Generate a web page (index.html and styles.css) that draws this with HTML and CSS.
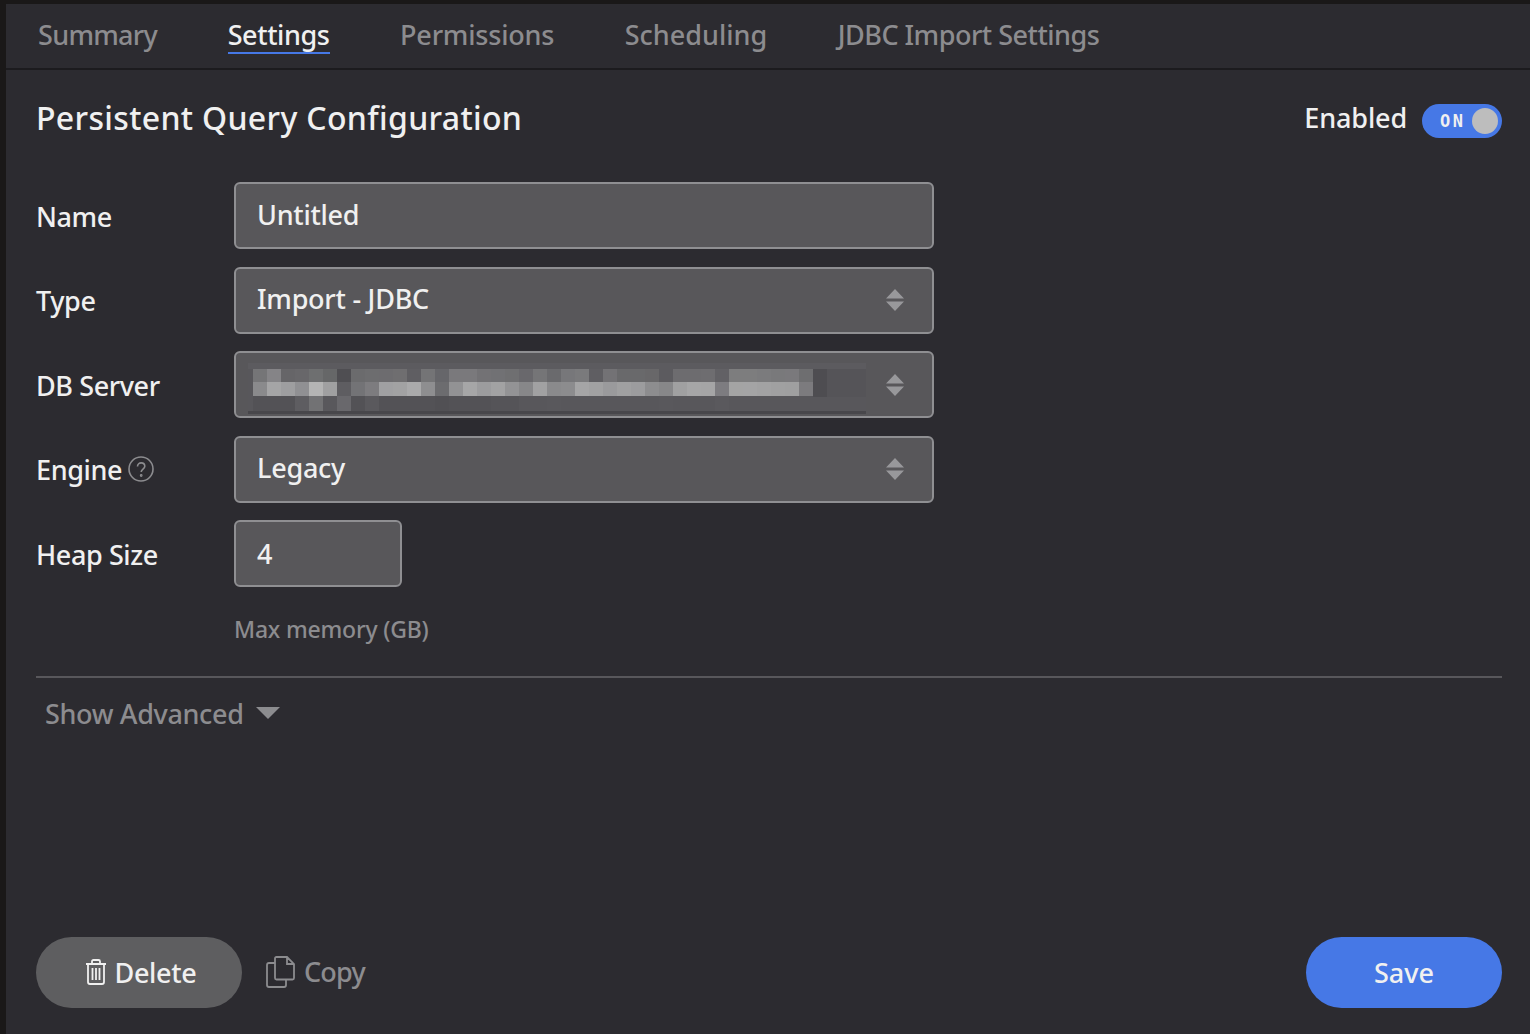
FILE: index.html
```html
<!DOCTYPE html>
<html lang="en">
<head>
<meta charset="utf-8">
<title>Persistent Query Configuration</title>
<link rel="stylesheet" href="styles.css">
</head>
<body>
<main class="panel">
  <nav class="tabs">
    <a class="tab tight">Summary</a>
    <a class="tab active">Settings</a>
    <a class="tab mid">Permissions</a>
    <a class="tab loose">Scheduling</a>
    <a class="tab long">JDBC Import Settings</a>
  </nav>
  <section class="content">
    <header class="head">
      <h1 class="title">Persistent Query Configuration</h1>
      <div class="enabled">
        <span class="enabled-label">Enabled</span>
        <span class="toggle"><span class="toggle-text">ON</span><span class="knob"></span></span>
      </div>
    </header>
    <form class="form">
      <div class="row">
        <label class="label">Name</label>
        <div class="field">Untitled</div>
      </div>
      <div class="row">
        <label class="label">Type</label>
        <div class="field">Import - JDBC
          <svg class="updown" viewBox="0 0 18 24"><path d="M9 1 L18 10.500 H0 Z M0 13.500 H18 L9 23 Z"/></svg>
        </div>
      </div>
      <div class="row">
        <label class="label">DB Server</label>
        <div class="field">
          <svg class="redacted" viewBox="0 0 618 51" shape-rendering="crispEdges">
            <rect class="base" x="0" y="0" width="618" height="51" fill="#58575b"/>
            <rect class="base" x="0" y="0" width="618" height="6" fill="#5c5b5f"/>
            <rect class="base" x="0" y="48" width="618" height="3" fill="#48474b"/>
            <rect class="base" x="565" y="6" width="53" height="28" fill="#555458"/>
            <rect class="base" x="565" y="6" width="14" height="28" fill="#4e4d51"/>
            <g class="cells r1">
              <rect x="5" fill="#757577"/><rect x="19" fill="#858487"/><rect x="33" fill="#666568"/><rect x="47" fill="#68676a"/><rect x="61" fill="#6e6f70"/><rect x="75" fill="#666768"/><rect x="89" fill="#4f4e52"/><rect x="103" fill="#6b6b6d"/><rect x="117" fill="#6d6d6f"/><rect x="131" fill="#6d6c6f"/><rect x="145" fill="#6f6e70"/><rect x="159" fill="#5f5e62"/><rect x="173" fill="#747476"/><rect x="187" fill="#66666a"/><rect x="201" fill="#7a797c"/><rect x="215" fill="#7a797c"/><rect x="229" fill="#737275"/><rect x="243" fill="#717174"/><rect x="257" fill="#6f6f71"/><rect x="271" fill="#69686c"/><rect x="285" fill="#757577"/><rect x="299" fill="#6a6a6d"/><rect x="313" fill="#77777a"/><rect x="327" fill="#7a7a7c"/><rect x="341" fill="#5f5e62"/><rect x="355" fill="#737275"/><rect x="369" fill="#69696b"/><rect x="383" fill="#69696b"/><rect x="397" fill="#686769"/><rect x="411" fill="#5c5b5f"/><rect x="425" fill="#6d6c6f"/><rect x="439" fill="#6d6c6f"/><rect x="453" fill="#6e6d70"/><rect x="467" fill="#626165"/><rect x="481" fill="#7d7d7e"/><rect x="495" fill="#7d7d7e"/><rect x="509" fill="#7b7b7d"/><rect x="523" fill="#79797b"/><rect x="537" fill="#7a797c"/><rect x="551" fill="#6e6e70"/>
            </g>
            <g class="cells r2">
              <rect x="5" fill="#8a8a8c"/><rect x="19" fill="#a5a5a6"/><rect x="33" fill="#9e9ea0"/><rect x="47" fill="#909093"/><rect x="61" fill="#b4b4b4"/><rect x="75" fill="#a0a0a1"/><rect x="89" fill="#5e5d61"/><rect x="103" fill="#737376"/><rect x="117" fill="#7d7c7f"/><rect x="131" fill="#a0a0a2"/><rect x="145" fill="#a2a2a3"/><rect x="159" fill="#aaaaab"/><rect x="173" fill="#8e8e90"/><rect x="187" fill="#6c6c6f"/><rect x="201" fill="#929294"/><rect x="215" fill="#a6a6a7"/><rect x="229" fill="#9c9c9e"/><rect x="243" fill="#a2a2a3"/><rect x="257" fill="#939395"/><rect x="271" fill="#878789"/><rect x="285" fill="#a1a1a2"/><rect x="299" fill="#8a8a8c"/><rect x="313" fill="#8c8c8e"/><rect x="327" fill="#a5a5a6"/><rect x="341" fill="#a1a1a2"/><rect x="355" fill="#9a9a9c"/><rect x="369" fill="#a0a0a1"/><rect x="383" fill="#9c9c9e"/><rect x="397" fill="#8d8d8f"/><rect x="411" fill="#878789"/><rect x="425" fill="#a0a0a1"/><rect x="439" fill="#a6a6a7"/><rect x="453" fill="#a5a5a6"/><rect x="467" fill="#7d7c80"/><rect x="481" fill="#a4a4a4"/><rect x="495" fill="#a4a4a5"/><rect x="509" fill="#a2a2a3"/><rect x="523" fill="#a0a0a1"/><rect x="537" fill="#9f9fa0"/><rect x="551" fill="#7c7b7e"/>
            </g>
            <g class="cells r3">
              <rect x="5" fill="#535256"/><rect x="19" fill="#535256"/><rect x="33" fill="#535256"/><rect x="47" fill="#5e5d61"/><rect x="61" fill="#727274"/><rect x="75" fill="#59585c"/><rect x="89" fill="#69686c"/><rect x="103" fill="#535256"/><rect x="117" fill="#5a595d"/><rect x="131" fill="#535256"/><rect x="145" fill="#535256"/><rect x="159" fill="#535256"/><rect x="173" fill="#535256"/><rect x="187" fill="#515054"/><rect x="201" fill="#535256"/><rect x="215" fill="#535256"/><rect x="229" fill="#535256"/><rect x="243" fill="#555458"/><rect x="257" fill="#555458"/><rect x="299" fill="#59585c"/><rect x="411" fill="#59585c"/><rect x="467" fill="#5a595d"/>
            </g>
          </svg>
          <svg class="updown" viewBox="0 0 18 24"><path d="M9 1 L18 10.500 H0 Z M0 13.500 H18 L9 23 Z"/></svg>
        </div>
      </div>
      <div class="row">
        <label class="label">Engine
          <svg class="help" viewBox="0 0 26 26"><circle cx="13" cy="13" r="12" /><path d="M9.500 10.500 C9.500 5.500 16.800 5.800 16.800 10.300 C16.800 13 13.200 13.300 13.200 16"/><circle class="dot" cx="13.200" cy="19.500" r="0.600"/></svg>
        </label>
        <div class="field">Legacy
          <svg class="updown" viewBox="0 0 18 24"><path d="M9 1 L18 10.500 H0 Z M0 13.500 H18 L9 23 Z"/></svg>
        </div>
      </div>
      <div class="row">
        <label class="label">Heap Size</label>
        <div class="field short">4</div>
      </div>
      <p class="hint">Max memory (GB)</p>
    </form>
    <div class="advanced">Show Advanced <svg class="caret" viewBox="0 0 24 12"><path d="M0 0 H24 L12 12 Z"/></svg></div>
    <footer class="actions">
      <button class="btn delete" type="button">
        <svg class="ico-trash" viewBox="0 0 22 26"><path d="M1 5 H21 M7 5 V2.500 Q7 1 8.500 1 H13.500 Q15 1 15 2.500 V5 M3 5 V23 Q3 25 5 25 H17 Q19 25 19 23 V5 M7.500 9 V21 M11 9 V21 M14.500 9 V21"/></svg>
        Delete
      </button>
      <button class="btn copy" type="button">
        <svg class="ico-copy" viewBox="0 0 29 32"><path d="M9 6 V2.500 Q9 1 10.500 1 H21 L28 8 V22 Q28 23.500 26.500 23.500 H20 M21 1 V8 H28 M9 7 H3 Q1 7 1 9 V29 Q1 31 3 31 H18 Q20 31 20 29 V23.500 H10.500 Q9 23.500 9 22 Z"/></svg>
        Copy
      </button>
      <button class="btn save" type="button">Save</button>
    </footer>
  </section>
</main>
</body>
</html>
```
FILE: styles.css
```css
* { box-sizing: border-box; }
html, body { height: 100%; }
body {
  margin: 0;
  background: #1a1818;
  padding: 4px 0 0 6px;
  font-family: "Noto Sans", "Open Sans", sans-serif;
  font-weight: 500;
  color: #f0f0f0;
  overflow: hidden;
}
.panel { height: 1030px; background: #2c2b30; display: flex; flex-direction: column; }
.tabs {
  height: 66px;
  flex: none;
  display: flex;
  gap: 70.500px;
  padding: 8px 0 0 32px;
  border-bottom: 2px solid #1c1b1e;
  font-size: 27px;
  letter-spacing: -0.400px;
}
.tab { color: #8c8c8f; height: 42px; line-height: 46px; }
.tab.tight { letter-spacing: -0.700px; }
.tab.mid { letter-spacing: -0.200px; }
.tab.loose { letter-spacing: 0; }
.tab.long { letter-spacing: -0.500px; }
.tab.active { color: #f0f0f0; border-bottom: 2px solid #4678e6; }
.content { flex: 1; display: flex; flex-direction: column; padding: 0 28px 26px 30px; }
.head { display: flex; justify-content: space-between; height: 112px; padding-top: 26px; }
.title { margin: 0; font-size: 32px; font-weight: 500; line-height: 44px; letter-spacing: 0.330px; }
.enabled { display: flex; align-items: flex-start; gap: 15px; padding-top: 4px; }
.enabled-label { font-size: 27px; line-height: 36px; letter-spacing: -0.150px; }
.toggle {
  width: 80px; height: 34px; margin-top: 4px; border-radius: 17px; background: #4678e6;
  display: flex; align-items: center; justify-content: space-between; padding: 0 4px 0 18px;
}
.toggle-text { font-size: 17px; font-weight: 700; letter-spacing: 2.500px; font-family: "DejaVu Sans Mono", monospace; }
.knob { width: 26px; height: 26px; border-radius: 50%; background: #bdbdbd; }
.form { display: flex; flex-direction: column; gap: 17.500px; }
.row { display: flex; align-items: center; height: 67px; }
.label { width: 198px; flex: none; font-size: 27px; display: flex; align-items: center; gap: 6px; padding-top: 2px; letter-spacing: -0.400px; }
.field {
  position: relative;
  width: 700px; height: 67px;
  background: #58575a;
  border: 2px solid #8f8f92;
  border-radius: 6px;
  padding-left: 21px;
  font-size: 27px;
  line-height: 61px;
  letter-spacing: -0.250px;
}
.field.short { width: 168px; line-height: 63px; }
.updown { position: absolute; right: 28px; top: 20px; width: 18px; height: 24px; fill: #98989b; }
.row:nth-child(even) .label { padding-top: 0; }
.row:nth-child(even) .field { line-height: 59px; }
.row:nth-child(even) .updown { top: 19px; }
.redacted { position: absolute; left: 12px; top: 10px; width: 618px; height: 51px; display: block; }
.cells rect { width: 14px; }
.r1 rect { y: 6px; height: 13px; }
.r2 rect { y: 19px; height: 14px; }
.r3 rect { y: 33px; height: 15px; }
.help { width: 26px; height: 26px; fill: none; stroke: #8c8c8f; stroke-width: 1.600; }
.hint { margin: 0 0 0 198px; color: #8c8c8f; font-size: 23px; line-height: 34px; letter-spacing: -0.200px; position: relative; top: 7px; }
.advanced { margin-top: 37px; padding: 17px 0 0 9px; border-top: 2px solid #58575b; color: #8c8c8f; font-size: 27px; letter-spacing: -0.350px; display: flex; align-items: center; gap: 12px; }
.caret { width: 24px; height: 12px; fill: #8c8c8f; }
.actions { margin-top: auto; display: flex; align-items: center; gap: 24px; }
.btn { border: 0; font: inherit; font-size: 27px; height: 71px; border-radius: 36px; padding-bottom: 2px; display: flex; align-items: center; justify-content: center; }
.delete { width: 206px; background: #5e5e60; color: #f0f0f0; gap: 7px; padding-left: 10px; letter-spacing: -0.300px; }
.copy { background: none; color: #8c8c8f; padding: 0 0 2px; gap: 9px; letter-spacing: -0.800px; }
.save { width: 196px; margin-left: auto; background: #4678e6; color: #f0f0f0; }
.ico-trash { width: 22px; height: 26px; fill: none; stroke: #f0f0f0; stroke-width: 1.800; }
.ico-copy { width: 29px; height: 32px; fill: none; stroke: #8c8c8f; stroke-width: 1.800; }
```
